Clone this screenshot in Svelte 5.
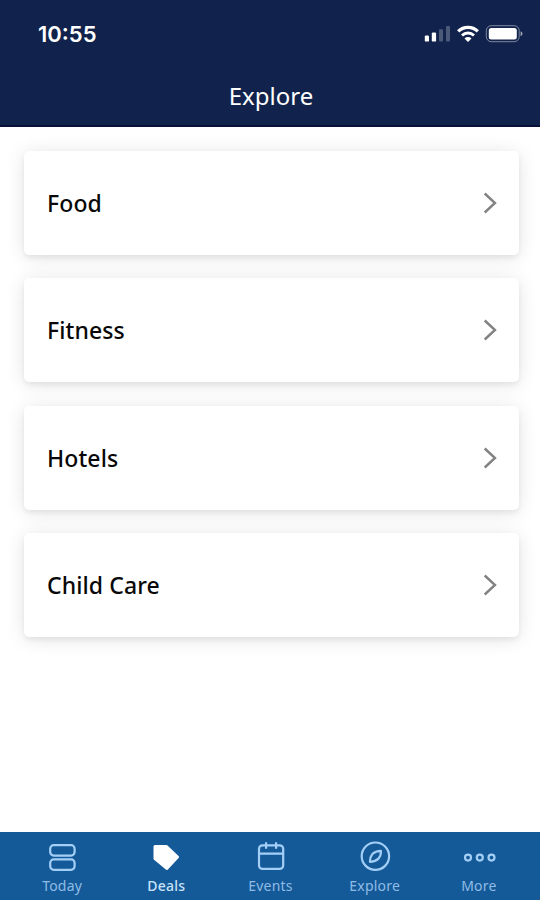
<script>
  const categories = ["Food", "Fitness", "Hotels", "Child Care"]
  const tabs = ["Today", "Deals", "Events", "Explore", "More"]

  let active = "Deals"
</script>

<div class="app">
  <header>
    <div class="status">
      <span class="time">10:55</span>
      <svg class="indicators" width="100" height="20" viewBox="0 0 100 20" fill="#fff">
        <rect x="0.8" y="11.4" width="4.2" height="6.2" rx="1.2" />
        <rect x="7.8" y="8.4" width="4.3" height="9.2" rx="1.2" />
        <rect x="15" y="5.2" width="4" height="12.4" rx="1" opacity=".25" />
        <rect x="22" y="2" width="4" height="15.6" rx="1" opacity=".25" />
        <g fill="none" stroke="#fff" stroke-width="3.2">
          <path d="M34.2 7.3a14 14 0 0 1 19.6 0" />
          <path d="M38 11.5a8.6 8.6 0 0 1 12 0" stroke-width="2.9" />
        </g>
        <path d="M44 18l-3.5-3.5a5 5 0 0 1 7 0z" />
        <rect x="62.3" y="1.7" width="32.9" height="16" rx="5" fill="none" stroke="#fff" stroke-opacity=".45" />
        <rect x="64.8" y="4" width="28" height="11.6" rx="2.5" />
        <path d="M96.6 7.2v5q1.9-.8 1.9-2.5t-1.9-2.5z" opacity=".6" />
      </svg>
    </div>
    <h1>Explore</h1>
  </header>

  <main>
    {#each categories as category}
      <div class="card">
        <span>{category}</span>
        <svg width="14" height="22" viewBox="0 0 14 22" fill="none" stroke="#828282" stroke-width="2.4">
          <path d="M1.7 1.5l10.3 9.5-10.3 9.5" />
        </svg>
      </div>
    {/each}
  </main>

  <nav>
    {#each tabs as tab}
      <button class:active={tab === active} on:click={() => (active = tab)}>
        <svg width="36" height="32" viewBox="0 0 36 32" fill="none" stroke="currentColor" stroke-width="2.2">
          {#if tab === "Today"}
            <rect x="6.2" y="4.2" width="24.4" height="10.4" rx="3.5" />
            <rect x="6.2" y="18.4" width="24.4" height="10.4" rx="3.5" />
          {:else if tab === "Deals"}
            <path d="M7 5.5h11.5L29.5 16 18.8 27.4 7 17.5z" fill="currentColor" stroke-width="3" stroke-linejoin="round" />
          {:else if tab === "Events"}
            <rect x="6" y="4.3" width="24.2" height="23.6" rx="3.5" />
            <path d="M6 12.6h24.2M13.1 1.3v6.5M23.1 1.3v6.5" />
          {:else if tab === "Explore"}
            <circle cx="18.4" cy="15.2" r="13.7" />
            <path d="M23.9 9.8q.4 4.5-2.4 7.8-3 3-8.6 3.2.1-5 2.5-7.8 3-3 8.5-3.2z" stroke-linejoin="round" />
          {:else}
            <circle cx="7" cy="16.6" r="3" />
            <circle cx="18.8" cy="16.6" r="3" />
            <circle cx="30.5" cy="16.6" r="3" />
          {/if}
        </svg>
        <span>{tab}</span>
      </button>
    {/each}
  </nav>
</div>

<style>
  :global(body) {
    margin: 0;
  }

  .app {
    display: flex;
    flex-direction: column;
    height: 900px;
    overflow: hidden;
    background: #fff;
    font-family: "Noto Sans", sans-serif;
  }

  header {
    box-sizing: border-box;
    height: 127px;
    background: #11234c;
    border-bottom: 2px solid #07113a;
    color: #fff;
  }

  .status {
    display: flex;
    align-items: center;
    justify-content: space-between;
    height: 68px;
    padding: 0 16px 0 38px;
  }

  .time {
    font: 600 22px/24px Inter, sans-serif;
  }

  h1 {
    margin: 11px 0 0;
    padding-left: 2px;
    text-align: center;
    font-size: 24px;
    font-weight: 400;
    line-height: 34px;
  }

  main {
    display: flex;
    flex: 1;
    flex-direction: column;
    gap: 23.3px;
    padding: 24px 21px 0 24px;
  }

  .card {
    box-sizing: border-box;
    display: flex;
    align-items: center;
    justify-content: space-between;
    height: 104px;
    padding: 0 22px 0 23px;
    border-radius: 5px;
    background: #fff;
    box-shadow: 0 3px 5px rgba(0, 0, 0, 0.06), 0 2px 20px rgba(0, 0, 0, 0.11);
    color: #080808;
    font-size: 23px;
    font-weight: 500;
    letter-spacing: 0.1px;
  }

  nav {
    box-sizing: border-box;
    display: flex;
    height: 68px;
    padding: 9px 9px 0 10px;
    background: #155a98;
  }

  button {
    display: flex;
    flex: 1;
    flex-direction: column;
    align-items: center;
    padding: 0;
    border: 0;
    background: none;
    color: #a3cff7;
    font: 400 14px/20px "Noto Sans", sans-serif;
  }

  button span {
    margin-top: 3px;
    color: #8fbce6;
    letter-spacing: 0.2px;
  }

  button.active {
    color: #fff;
  }

  button.active span {
    color: #c8e2fa;
    font-weight: 500;
  }
</style>
